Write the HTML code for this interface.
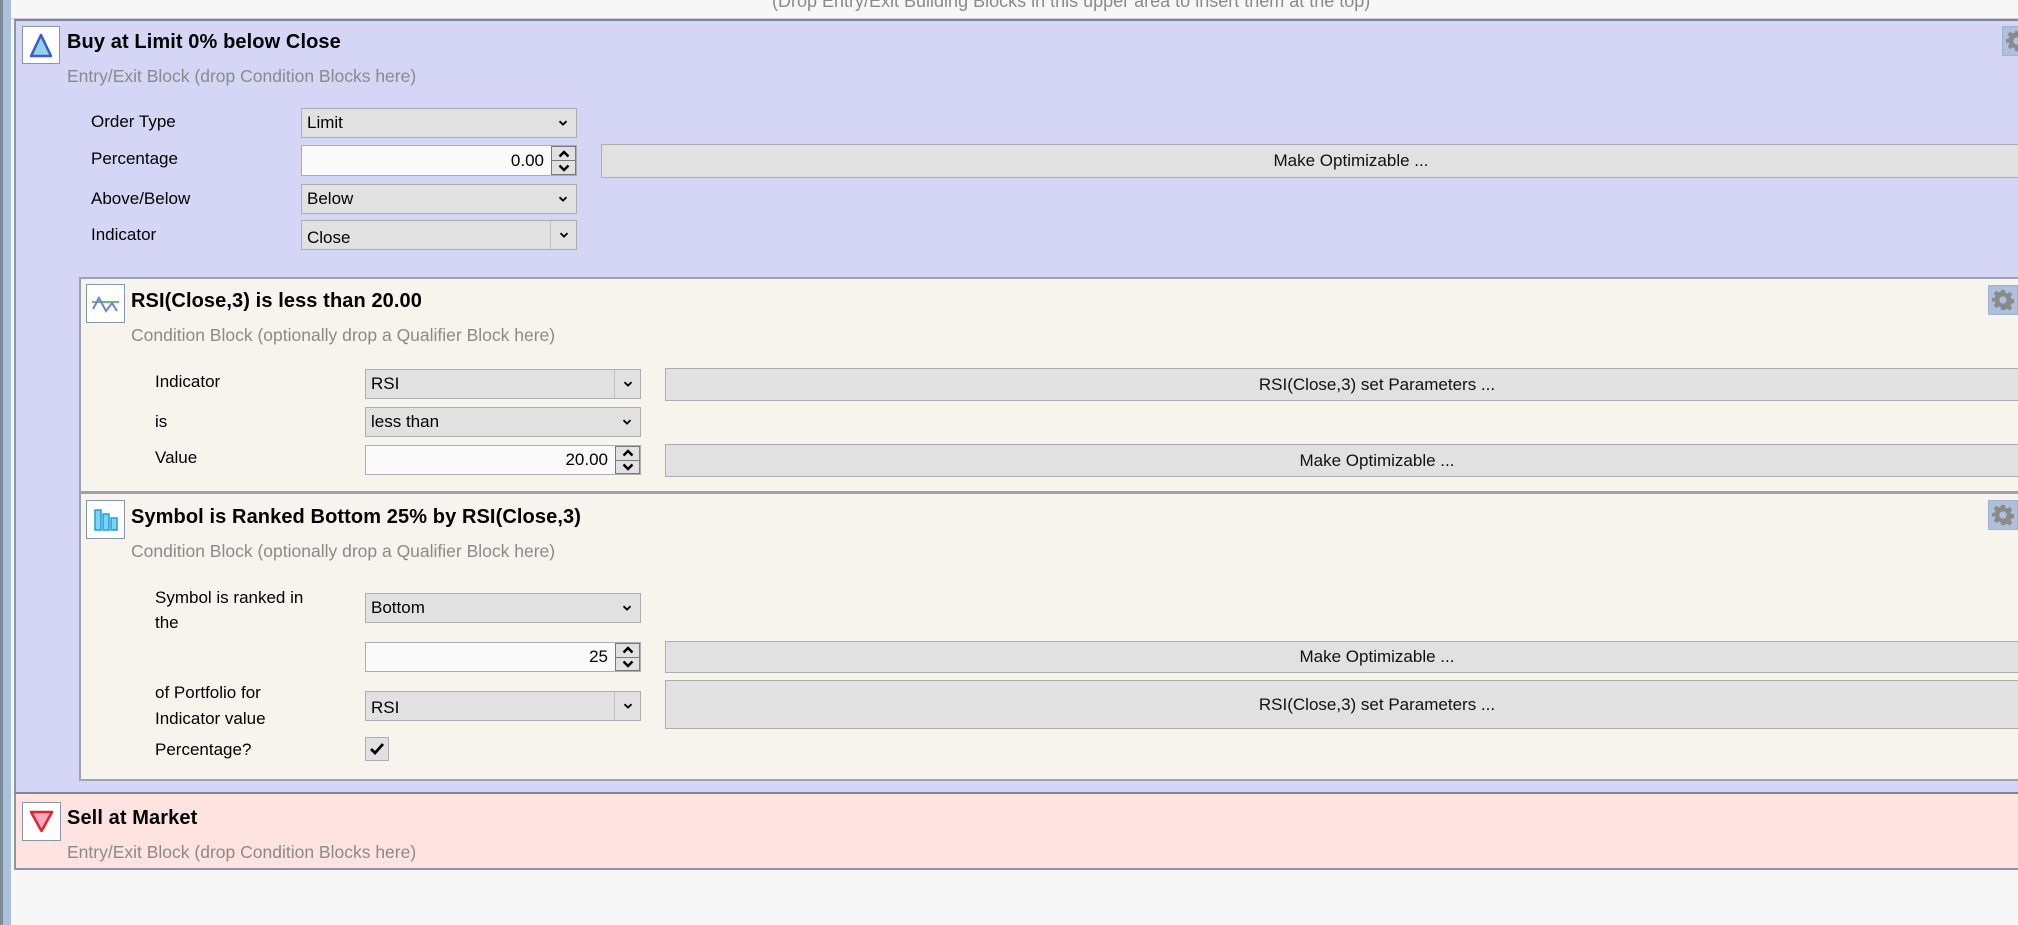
<!DOCTYPE html>
<html><head><meta charset="utf-8"><style>
*{box-sizing:border-box;margin:0;padding:0}
body{width:2018px;height:925px;overflow:hidden;background:#f7f7f7;font-family:"Liberation Sans",sans-serif;position:relative;color:#000}
.a{position:absolute}
.lbl{position:absolute;font-size:17px;line-height:20px;color:#000}
.ttl{position:absolute;font-size:20px;font-weight:bold;line-height:22px;letter-spacing:0.1px}
.sub{position:absolute;font-size:17.5px;color:#8a8a8a;line-height:20px}
.dd{position:absolute;background:#e1e1e1;border:1px solid #adadad;font-size:17px;padding-left:5px;display:flex;align-items:center}
.dd .ch{position:absolute;right:0;top:0;bottom:0;width:26px;display:flex;align-items:center;justify-content:center}
.dd .ch.sep{border-left:1px solid #c0c0c0}
.sp{position:absolute;background:#fafafa;border:1px solid #adadad;font-size:17px;text-align:right;padding-right:32px;display:flex;align-items:center;justify-content:flex-end}
.sp .ar{position:absolute;right:0;top:0;bottom:0;width:25px;border:1px solid #7a7a7a;background:#e1e1e1;display:flex;flex-direction:column}
.sp .ar div{flex:1;display:flex;align-items:center;justify-content:center}
.sp .ar div+div{border-top:1px solid #7a7a7a}
.btn{position:absolute;background:#e1e1e1;border:1px solid #adadad;font-size:17px;display:flex;align-items:center;justify-content:center;color:#111}
.icon{position:absolute;background:#fff;border:1px solid #8896a8}
.gear{position:absolute;width:30px;height:30px;background:#aec0dc;border:1px solid #9fb2d0;display:flex;align-items:center;justify-content:center}
</style></head><body>
<svg width="0" height="0" style="position:absolute"><defs>
<symbol id="chev" viewBox="0 0 10 6"><polyline points="1.5,1.2 5,4.6 8.5,1.2" fill="none" stroke="#000" stroke-width="1.8"/></symbol>
<symbol id="up" viewBox="0 0 12 8"><polyline points="1.5,6.5 6,2 10.5,6.5" fill="none" stroke="#000" stroke-width="2.4"/></symbol>
<symbol id="dn" viewBox="0 0 12 8"><polyline points="1.5,1.5 6,6 10.5,1.5" fill="none" stroke="#000" stroke-width="2.4"/></symbol>
<symbol id="gr" viewBox="0 0 24 24"><path fill="#8a8a8a" d="M10 1h4l.6 3.2 2 .9 2.7-1.9 2.8 2.8-1.9 2.7.9 2 3.2.6v4l-3.2.6-.9 2 1.9 2.7-2.8 2.8-2.7-1.9-2 .9L14 23h-4l-.6-3.2-2-.9-2.7 1.9-2.8-2.8 1.9-2.7-.9-2L-.3 14v-4l3.2-.6.9-2L1.9 4.7 4.7 1.9l2.7 1.9 2-.9zM12 8a4 4 0 1 0 0 8 4 4 0 1 0 0-8z"/></symbol>
</defs></svg>
<div class="a" style="left:0;top:0;width:3px;height:925px;background:#7d8a98"></div>
<div class="a" style="left:3px;top:0;width:8px;height:925px;background:#aac0dc"></div>
<div class="a" style="left:772px;top:-9px;font-size:18px;color:#8a8a8a;white-space:nowrap">(Drop Entry/Exit Building Blocks in this upper area to insert them at the top)</div>
<div class="a" style="left:11px;top:18px;width:2010px;height:1px;background:#ccd"></div>

<!-- Buy block -->
<div class="a" style="left:14px;top:19px;width:2010px;height:775px;background:#d5d5f5;border-top:2px solid #7b8796;border-left:2px solid #8996a8;border-bottom:2px solid #7b8796"></div>
<div class="icon" style="left:22px;top:26px;width:38px;height:38px"><svg width="36" height="36" viewBox="0 0 36 36"><polygon points="18,8 28,29 8,29" fill="#8fd4ea" stroke="#4257cf" stroke-width="2.5" stroke-linejoin="round"/></svg></div>
<div class="ttl" style="left:67px;top:31px">Buy at Limit 0% below Close</div>
<div class="sub" style="left:67px;top:66px">Entry/Exit Block (drop Condition Blocks here)</div>
<div class="gear" style="left:2002px;top:26px"><svg width="22" height="22"><use href="#gr"/></svg></div>
<div class="lbl" style="left:91px;top:112px">Order Type</div>
<div class="dd" style="left:301px;top:108px;width:276px;height:30px">Limit<span class="ch"><svg width="10" height="6"><use href="#chev"/></svg></span></div>
<div class="lbl" style="left:91px;top:149px">Percentage</div>
<div class="sp" style="left:301px;top:145px;width:276px;height:31px">0.00<div class="ar"><div><svg width="12" height="8"><use href="#up"/></svg></div><div><svg width="12" height="8"><use href="#dn"/></svg></div></div></div>
<div class="btn" style="left:601px;top:144px;width:1500px;height:34px">Make Optimizable ...</div>
<div class="lbl" style="left:91px;top:189px">Above/Below</div>
<div class="dd" style="left:301px;top:184px;width:276px;height:30px">Below<span class="ch"><svg width="10" height="6"><use href="#chev"/></svg></span></div>
<div class="lbl" style="left:91px;top:225px">Indicator</div>
<div class="dd" style="left:301px;top:220px;width:276px;height:30px;padding-top:6px">Close<span class="ch sep"><svg width="10" height="6"><use href="#chev"/></svg></span></div>

<!-- RSI block -->
<div class="a" style="left:79px;top:277px;width:1950px;height:216px;background:#f7f4ee;border:2px solid #9aa3ae;border-right:none"></div>
<div class="icon" style="left:86px;top:284px;width:39px;height:39px"><svg width="37" height="37" viewBox="0 0 37 37"><line x1="5" y1="17" x2="32" y2="17" stroke="#5fc35f" stroke-width="2"/><polyline points="6,24 12,13 19,26 25,18 30,26" fill="none" stroke="#6688cc" stroke-width="2"/></svg></div>
<div class="ttl" style="left:131px;top:290px">RSI(Close,3) is less than 20.00</div>
<div class="sub" style="left:131px;top:325px">Condition Block (optionally drop a Qualifier Block here)</div>
<div class="gear" style="left:1988px;top:285px"><svg width="22" height="22"><use href="#gr"/></svg></div>
<div class="lbl" style="left:155px;top:372px">Indicator</div>
<div class="dd" style="left:365px;top:369px;width:276px;height:30px">RSI<span class="ch sep"><svg width="10" height="6"><use href="#chev"/></svg></span></div>
<div class="btn" style="left:665px;top:368px;width:1424px;height:33px">RSI(Close,3) set Parameters ...</div>
<div class="lbl" style="left:155px;top:412px">is</div>
<div class="dd" style="left:365px;top:407px;width:276px;height:30px">less than<span class="ch"><svg width="10" height="6"><use href="#chev"/></svg></span></div>
<div class="lbl" style="left:155px;top:448px">Value</div>
<div class="sp" style="left:365px;top:445px;width:276px;height:30px">20.00<div class="ar"><div><svg width="12" height="8"><use href="#up"/></svg></div><div><svg width="12" height="8"><use href="#dn"/></svg></div></div></div>
<div class="btn" style="left:665px;top:444px;width:1424px;height:33px">Make Optimizable ...</div>

<!-- Symbol block -->
<div class="a" style="left:79px;top:492px;width:1950px;height:289px;background:#f7f4ee;border:2px solid #9aa3ae;border-right:none"></div>
<div class="icon" style="left:86px;top:500px;width:39px;height:39px"><svg width="37" height="37" viewBox="0 0 37 37"><rect x="8" y="9" width="6" height="20" fill="#7fd3f0" stroke="#1aa0e0" stroke-width="1.5"/><rect x="16" y="13" width="6" height="16" fill="#7fd3f0" stroke="#1aa0e0" stroke-width="1.5"/><rect x="24" y="17" width="6" height="12" fill="#7fd3f0" stroke="#1aa0e0" stroke-width="1.5"/></svg></div>
<div class="ttl" style="left:131px;top:506px">Symbol is Ranked Bottom 25% by RSI(Close,3)</div>
<div class="sub" style="left:131px;top:541px">Condition Block (optionally drop a Qualifier Block here)</div>
<div class="gear" style="left:1988px;top:500px"><svg width="22" height="22"><use href="#gr"/></svg></div>
<div class="lbl" style="left:155px;top:588px">Symbol is ranked in</div>
<div class="lbl" style="left:155px;top:613px">the</div>
<div class="dd" style="left:365px;top:593px;width:276px;height:30px">Bottom<span class="ch"><svg width="10" height="6"><use href="#chev"/></svg></span></div>
<div class="sp" style="left:365px;top:642px;width:276px;height:30px">25<div class="ar"><div><svg width="12" height="8"><use href="#up"/></svg></div><div><svg width="12" height="8"><use href="#dn"/></svg></div></div></div>
<div class="btn" style="left:665px;top:641px;width:1424px;height:32px">Make Optimizable ...</div>
<div class="lbl" style="left:155px;top:683px">of Portfolio for</div>
<div class="lbl" style="left:155px;top:709px">Indicator value</div>
<div class="dd" style="left:365px;top:691px;width:276px;height:30px;padding-top:4px">RSI<span class="ch sep"><svg width="10" height="6"><use href="#chev"/></svg></span></div>
<div class="btn" style="left:665px;top:680px;width:1424px;height:49px">RSI(Close,3) set Parameters ...</div>
<div class="lbl" style="left:155px;top:740px">Percentage?</div>
<div class="a" style="left:365px;top:737px;width:24px;height:24px;background:#e1e1e1;border:1px solid #adadad;display:flex;align-items:center;justify-content:center"><svg width="16" height="14" viewBox="0 0 16 14"><polyline points="2,7 6,11 14,2" fill="none" stroke="#000" stroke-width="2.8"/></svg></div>

<!-- Sell block -->
<div class="a" style="left:14px;top:794px;width:2010px;height:76px;background:#ffe3e0;border:2px solid #8b96a6;border-right:none;border-top:none"></div>
<div class="icon" style="left:22px;top:802px;width:39px;height:39px"><svg width="37" height="37" viewBox="0 0 37 37"><polygon points="8,9 29,9 18.5,28" fill="#ffa8be" stroke="#e8202c" stroke-width="2.5" stroke-linejoin="round"/></svg></div>
<div class="ttl" style="left:67px;top:807px">Sell at Market</div>
<div class="sub" style="left:67px;top:842px">Entry/Exit Block (drop Condition Blocks here)</div>
</body></html>
